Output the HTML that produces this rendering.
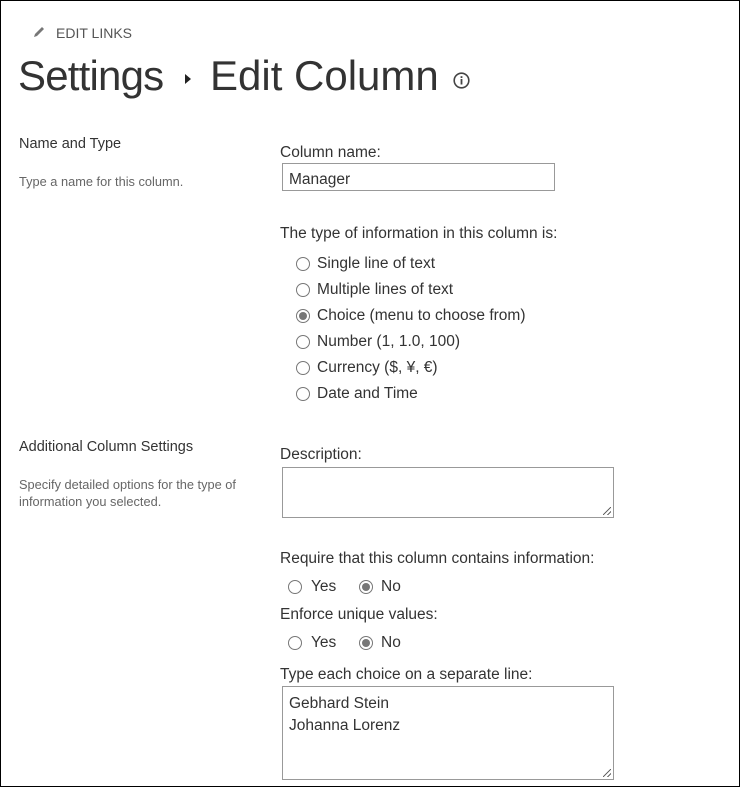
<!DOCTYPE html>
<html><head><style>
body{margin:0;width:740px;height:787px;position:relative;font-family:"Liberation Sans",sans-serif;color:#333;background:#fff;overflow:hidden}
.f{position:absolute;left:0;top:0;width:738px;height:785px;border:1px solid #000}
.a{position:absolute;white-space:nowrap}
.l{font-size:15.5px;color:#333}
.s{font-size:12.8px;color:#666}
.r{position:absolute;width:14px;height:14px;border:1px solid #777;border-radius:50%;box-sizing:border-box;background:#fff}
.r.on::after{content:"";position:absolute;left:2px;top:2px;width:8px;height:8px;border-radius:50%;background:#777}
.box{position:absolute;border:1px solid #999;box-sizing:border-box;background:#fff}
.g{position:absolute;right:2px;bottom:2px;width:8px;height:8px;background:linear-gradient(135deg,transparent 45%,#666 45%,#666 55%,transparent 55%,transparent 72%,#666 72%,#666 82%,transparent 82%)}
</style></head><body>
<div class="f"></div>
<svg class="a" style="left:32px;top:25px" width="14" height="14" viewBox="0 0 14 14"><path d="M2 12 L3 9 L10 2 L12 4 L5 11 Z" fill="#777"/></svg>
<div class="a" style="left:56px;top:25px;font-size:14px;color:#555">EDIT LINKS</div>
<div class="a" style="left:18px;top:52px;font-size:42px;color:#333;letter-spacing:-0.8px">Settings</div>
<svg class="a" style="left:185px;top:74px" width="6" height="10"><path d="M0 0 L6 5 L0 10Z" fill="#222"/></svg>
<div class="a" style="left:210px;top:52px;font-size:42px;color:#333;letter-spacing:0px">Edit Column</div>
<svg class="a" style="left:453px;top:72px" width="17" height="17" viewBox="0 0 17 17"><circle cx="8.5" cy="8.5" r="7.3" fill="none" stroke="#444" stroke-width="1.6"/><rect x="7.6" y="7" width="1.8" height="5.5" fill="#444"/><rect x="7.6" y="4.2" width="1.8" height="1.8" fill="#444"/></svg>
<div class="a l" style="left:19px;top:136px;font-size:14.5px">Name and Type</div>
<div class="a s" style="left:19px;top:174px">Type a name for this column.</div>
<div class="a l" style="left:280px;top:144px">Column name:</div>
<div class="box" style="left:282px;top:163px;width:273px;height:28px"></div>
<div class="a l" style="left:289px;top:171px">Manager</div>
<div class="a l" style="left:280px;top:225px">The type of information in this column is:</div>
<div class="r" style="left:296px;top:257px"></div><div class="a l" style="left:317px;top:255px">Single line of text</div>
<div class="r" style="left:296px;top:283px"></div><div class="a l" style="left:317px;top:281px">Multiple lines of text</div>
<div class="r on" style="left:296px;top:309px"></div><div class="a l" style="left:317px;top:307px">Choice (menu to choose from)</div>
<div class="r" style="left:296px;top:335px"></div><div class="a l" style="left:317px;top:333px">Number (1, 1.0, 100)</div>
<div class="r" style="left:296px;top:361px"></div><div class="a l" style="left:317px;top:359px">Currency ($, ¥, €)</div>
<div class="r" style="left:296px;top:387px"></div><div class="a l" style="left:317px;top:385px">Date and Time</div>
<div class="a l" style="left:19px;top:439px;font-size:14.5px">Additional Column Settings</div>
<div class="a s" style="left:19px;top:476px;line-height:17px">Specify detailed options for the type of<br>information you selected.</div>
<div class="a l" style="left:280px;top:446px">Description:</div>
<div class="box" style="left:282px;top:467px;width:332px;height:51px"><div class="g"></div></div>
<div class="a l" style="left:280px;top:550px">Require that this column contains information:</div>
<div class="r" style="left:288px;top:580px"></div><div class="a l" style="left:311px;top:578px">Yes</div>
<div class="r on" style="left:359px;top:580px"></div><div class="a l" style="left:381px;top:578px">No</div>
<div class="a l" style="left:280px;top:606px">Enforce unique values:</div>
<div class="r" style="left:288px;top:636px"></div><div class="a l" style="left:311px;top:634px">Yes</div>
<div class="r on" style="left:359px;top:636px"></div><div class="a l" style="left:381px;top:634px">No</div>
<div class="a l" style="left:280px;top:666px">Type each choice on a separate line:</div>
<div class="box" style="left:282px;top:686px;width:332px;height:94px"><div class="g"></div></div>
<div class="a l" style="left:289px;top:693px;line-height:22px">Gebhard Stein<br>Johanna Lorenz</div>
</body></html>
